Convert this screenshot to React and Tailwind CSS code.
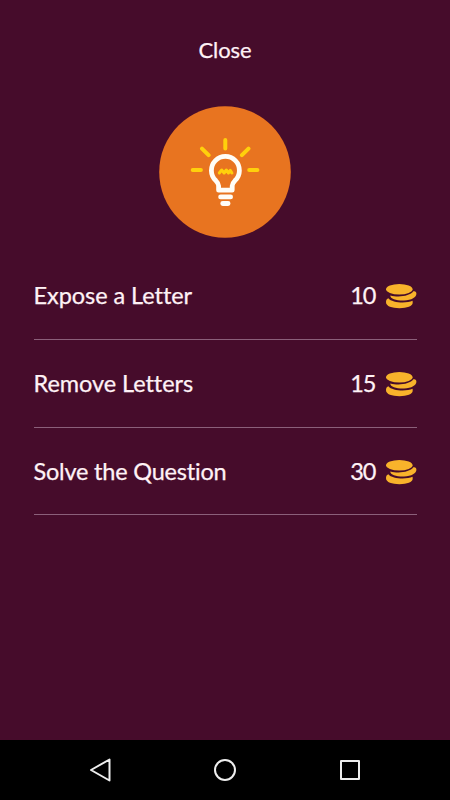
const items = [
  { label: 'Expose a Letter', cost: 10, height: 'h-[88px]', spacing: 'tracking-[-0.05px]' },
  { label: 'Remove Letters', cost: 15, height: 'h-[88px]', spacing: 'tracking-[-0.05px]' },
  { label: 'Solve the Question', cost: 30, height: 'h-[87px]', spacing: 'tracking-[-0.2px]' },
];

function Bulb() {
  return (
    <svg className="mt-[40px] size-[132px]" viewBox="159 106 132 132" fill="none" strokeLinecap="round" strokeLinejoin="round">
      <circle cx="225" cy="172" r="65.8" fill="#e87420" />
      <g stroke="#ffd00c" strokeWidth="4">
        <path d="M225.3 140v8.4M192.7 170h8.2M249.2 170h8.2M202 148.6l6.600 6.600M248.500 148.600l-6.600 6.600" />
        <path strokeWidth="3" d="M219.300 173l2.400-3 2.400 3 2.200-3 2.200 3 1.800-2.600 1.600 2.600" />
      </g>
      <g stroke="#fffdf7">
        <path strokeWidth="4.800" d="M218.600 190.200v-4.400c0-2-1.200-3.600-2.800-5.200a14 14 0 1 1 19.200 0c-1.600 1.600-2.800 3.200-2.800 5.200v4.400z" />
        <path strokeWidth="4.800" d="M220.600 196.900h10M222.700 203.500h5.400" />
      </g>
    </svg>
  );
}

function Coins() {
  return (
    <svg className="ml-[9px] h-[26px] w-8" viewBox="0 0 32 26" fill="#f8b32b">
      <ellipse cx="14.300" cy="6.200" rx="13.300" ry="5.200" />
      <path d="M28.300 8.300C30.300 7.800 31.400 8.800 31.400 10.800C31.400 14.300 26.800 17.300 19 17.500C11.500 17.700 5.300 15.800 5.300 12.400C13 14.500 25.300 13.300 28.300 8.300Z" />
      <path d="M3.300 15.200C1.500 16 1 17.300 1 19.300C1 23.300 7 25.200 14.500 25.200C22 25.200 27.700 23.300 27.700 19.800L27.600 17.800C21.500 20.500 7 20 3.300 15.200Z" />
    </svg>
  );
}

export default function App() {
  return (
    <div className="flex h-[800px] w-[450px] flex-col bg-[#460c2b] font-['Lato','Noto_Sans',sans-serif] text-[#fff2f6] [-webkit-text-stroke:0.25px_#fff2f6]">
      <main className="flex flex-1 flex-col items-center">
        <button className="mt-[34px] h-8 text-[22px] leading-8 tracking-[-0.1px]">Close</button>
        <Bulb />
        <ul className="mt-[14px] w-[383px]">
          {items.map(({ label, cost, height, spacing }) => (
            <li key={label} className={`flex items-center border-b border-[#8b607a] pt-[1px] text-[23.5px] ${height}`}>
              <span className={`flex-1 whitespace-nowrap ${spacing}`}>{label}</span>
              <span className="tracking-[-1px]">{cost}</span>
              <Coins />
            </li>
          ))}
        </ul>
      </main>
      <nav className="flex h-[60px] items-center justify-between bg-black px-[88px]">
        <svg className="size-6" viewBox="0 0 24 24" fill="none" stroke="#eee" strokeWidth="2" strokeLinejoin="round">
          <path d="M3 12L21.500 1.500v21z" />
        </svg>
        <svg className="size-6" viewBox="0 0 24 24" fill="none" stroke="#eee" strokeWidth="2">
          <circle cx="12" cy="12" r="10" />
        </svg>
        <svg className="size-6" viewBox="0 0 24 24" fill="none" stroke="#eee" strokeWidth="2" strokeLinejoin="round">
          <path d="M3 3h18v18H3z" />
        </svg>
      </nav>
    </div>
  );
}
